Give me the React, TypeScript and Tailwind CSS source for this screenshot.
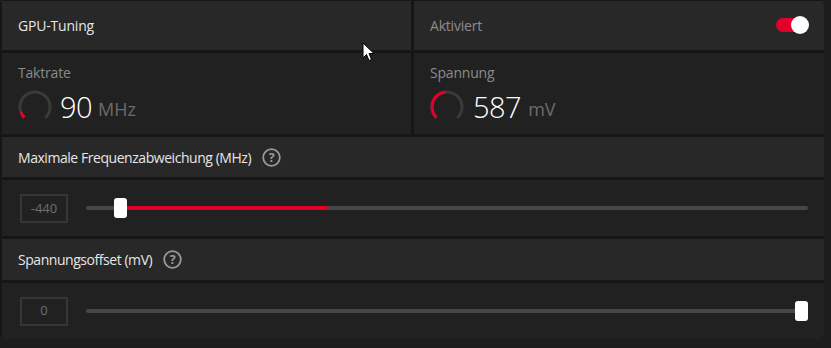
import React from "react";

const RED = "#e0002b";

function Gauge({ fraction }: { fraction: number }) {
  const r = 15;
  const C = 2 * Math.PI * r;
  const arc = 0.75 * C;
  const red = arc * fraction;
  return (
    <svg width="34" height="34" viewBox="0 0 34 34" className="shrink-0">
      <circle
        cx="17"
        cy="17"
        r={r}
        fill="none"
        stroke="#3a3a3a"
        strokeWidth="3"
        strokeDasharray={`${arc} ${C}`}
        transform="rotate(135 17 17)"
      />
      <circle
        cx="17"
        cy="17"
        r={r}
        fill="none"
        stroke={RED}
        strokeWidth="3"
        strokeDasharray={`${red} ${C}`}
        transform="rotate(135 17 17)"
      />
    </svg>
  );
}

function Help() {
  return (
    <svg width="19" height="19" viewBox="0 0 19 19" className="ml-[11px]">
      <circle cx="9.5" cy="9.5" r="8.3" fill="none" stroke="#9a9a9a" strokeWidth="1.8" />
      <text
        x="9.5"
        y="14"
        textAnchor="middle"
        fontSize="12.5"
        fontWeight="700"
        fill="#9a9a9a"
        fontFamily="'Open Sans', sans-serif"
      >
        ?
      </text>
    </svg>
  );
}

function SliderRow({
  value,
  thumbLeft,
  fillFrom,
  fillTo,
}: {
  value: string;
  thumbLeft: number;
  fillFrom?: number;
  fillTo?: number;
}) {
  return (
    <div className="h-[56px] bg-[#212121] flex items-center pl-[18px] pr-[16px]">
      <div className="w-[48px] h-[29px] border-2 border-[#363636] flex items-center justify-center text-[13px] text-[#6e6e6e]">
        {value}
      </div>
      <div className="relative flex-1 ml-[18px] h-[20px]">
        <div className="absolute left-0 right-0 top-[8px] h-[4px] rounded-full bg-[#464646]" />
        {fillFrom !== undefined && fillTo !== undefined && (
          <div
            className="absolute top-[8px] h-[4px] bg-[#e0002b]"
            style={{ left: `${fillFrom}px`, width: `${fillTo - fillFrom}px` }}
          />
        )}
        <div
          className="absolute top-0 w-[13px] h-[20px] rounded-[3px] bg-white"
          style={{ left: `${thumbLeft}px` }}
        />
      </div>
    </div>
  );
}

export default function App() {
  return (
    <div
      className="relative w-[831px] h-[348px] bg-[#1d1d1d] overflow-hidden"
      style={{ fontFamily: "'Open Sans', 'Noto Sans', sans-serif" }}
    >
      <div className="w-[824px] h-[339px] bg-[#161616] rounded-[5px] overflow-hidden pl-[2px] pt-[1px] flex flex-col gap-[3px]">
        {/* Row 1 */}
        <div className="flex gap-[3px] h-[49px]">
          <div className="flex-1 bg-[#282828] flex items-center pl-[16px] text-[14px] text-[#e6e6e6] tracking-[-0.2px]">
            GPU-Tuning
          </div>
          <div className="w-[410px] bg-[#282828] flex items-center justify-between pl-[16px] pr-[16px]">
            <span className="text-[14px] text-[#8c8c8c] tracking-[-0.2px]">Aktiviert</span>
            <div className="relative w-[32px] h-[14px] rounded-full bg-[#e0002b]">
              <div className="absolute right-[-1px] top-[-2px] w-[18px] h-[18px] rounded-full bg-white" />
            </div>
          </div>
        </div>
        {/* Row 2 */}
        <div className="flex gap-[3px] h-[81px]">
          <div className="flex-1 bg-[#212121] pl-[16px] pt-[10px]">
            <div className="text-[14px] text-[#8a8a8a] leading-[20px] tracking-[-0.2px]">Taktrate</div>
            <div className="flex items-center mt-[5px]">
              <Gauge fraction={0.09} />
              <span className="ml-[8px] text-[29px] leading-[34px] font-light text-white tracking-[-0.5px]">90</span>
              <span className="ml-[6px] text-[18px] leading-[34px] mt-[4px] text-[#6c6c6c]">MHz</span>
            </div>
          </div>
          <div className="w-[410px] bg-[#212121] pl-[16px] pt-[10px]">
            <div className="text-[14px] text-[#8a8a8a] leading-[20px] tracking-[-0.2px]">Spannung</div>
            <div className="flex items-center mt-[5px]">
              <Gauge fraction={0.48} />
              <span className="ml-[9px] text-[29px] leading-[34px] font-light text-white tracking-[-0.5px]">587</span>
              <span className="ml-[7px] text-[18px] leading-[34px] mt-[4px] text-[#6c6c6c]">mV</span>
            </div>
          </div>
        </div>
        {/* Header 3 */}
        <div className="h-[41px] bg-[#282828] flex items-center pl-[16px] text-[14px] text-[#e6e6e6] tracking-[-0.45px]">
          Maximale Frequenzabweichung (MHz)
          <Help />
        </div>
        <SliderRow value="-440" thumbLeft={28} fillFrom={34} fillTo={241} />
        {/* Header 4 */}
        <div className="h-[41px] bg-[#282828] flex items-center pl-[16px] text-[14px] text-[#e6e6e6] tracking-[-0.45px]">
          Spannungsoffset (mV)
          <Help />
        </div>
        <SliderRow value="0" thumbLeft={709} />
      </div>
      {/* mouse cursor */}
      <svg
        className="absolute left-[362px] top-[42px]"
        width="13"
        height="20"
        viewBox="0 0 13 20"
      >
        <path
          d="M1 1 L1 16 L4.5 12.5 L7 18.5 L9.5 17.5 L7 11.5 L12 11.5 Z"
          fill="#fff"
          stroke="#000"
          strokeWidth="1"
          strokeLinejoin="round"
        />
      </svg>
    </div>
  );
}
